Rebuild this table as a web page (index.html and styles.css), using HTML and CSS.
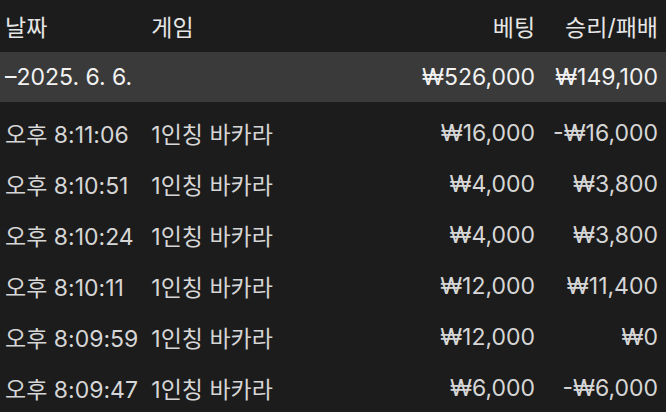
FILE: index.html
```html
<!DOCTYPE html>
<html lang="ko">
<head>
    <meta charset="UTF-8">
    <meta name="viewport" content="width=device-width, initial-scale=1.0">
    <title>베팅 내역</title>
    <link rel="stylesheet" href="styles.css">
</head>
<body>

<table class="history">
    <thead>
        <tr>
            <th class="col-date">날짜</th>
            <th class="col-game">게임</th>
            <th class="num bet">베팅</th>
            <th class="num">승리/패배</th>
        </tr>
    </thead>
    <tbody>
        <tr class="day">
            <td colspan="2">–2025. 6. 6.</td>
            <td class="num bet">₩526,000</td>
            <td class="num">₩149,100</td>
        </tr>
        <tr class="spacer"><td colspan="4"></td></tr>
        <tr>
            <td>오후 8:11:06</td>
            <td>1인칭 바카라</td>
            <td class="num bet">₩16,000</td>
            <td class="num">-₩16,000</td>
        </tr>
        <tr>
            <td>오후 8:10:51</td>
            <td>1인칭 바카라</td>
            <td class="num bet">₩4,000</td>
            <td class="num">₩3,800</td>
        </tr>
        <tr>
            <td>오후 8:10:24</td>
            <td>1인칭 바카라</td>
            <td class="num bet">₩4,000</td>
            <td class="num">₩3,800</td>
        </tr>
        <tr>
            <td>오후 8:10:11</td>
            <td>1인칭 바카라</td>
            <td class="num bet">₩12,000</td>
            <td class="num">₩11,400</td>
        </tr>
        <tr>
            <td>오후 8:09:59</td>
            <td>1인칭 바카라</td>
            <td class="num bet">₩12,000</td>
            <td class="num">₩0</td>
        </tr>
        <tr>
            <td>오후 8:09:47</td>
            <td>1인칭 바카라</td>
            <td class="num bet">₩6,000</td>
            <td class="num">-₩6,000</td>
        </tr>
    </tbody>
</table>

</body>
</html>
```

FILE: styles.css
```css
html, body {
    margin: 0;
    padding: 0;
    background-color: #1c1c1c;
}
body {
    font-family: Inter, "Noto Sans CJK KR", sans-serif;
    font-size: 23px;
    color: #d6d6d6;
}
.history {
    width: 100%;
    border-collapse: collapse;
}
.history th, .history td {
    padding: 0 8px 0 5px;
    text-align: left;
    white-space: nowrap;
    font-weight: normal;
}
.history th {
    height: 52px;
    color: #e6e6e6;
}
.history .col-date {
    width: 132px;
}
.history .num {
    text-align: right;
    width: 1%;
}
.history .bet {
    padding-right: 13px;
}
.history td {
    height: 51px;
}
.history .day td {
    height: 50px;
    background-color: #3a3a3a;
    color: #f2f2f2;
}
.history .spacer td {
    height: 5px;
}
```
